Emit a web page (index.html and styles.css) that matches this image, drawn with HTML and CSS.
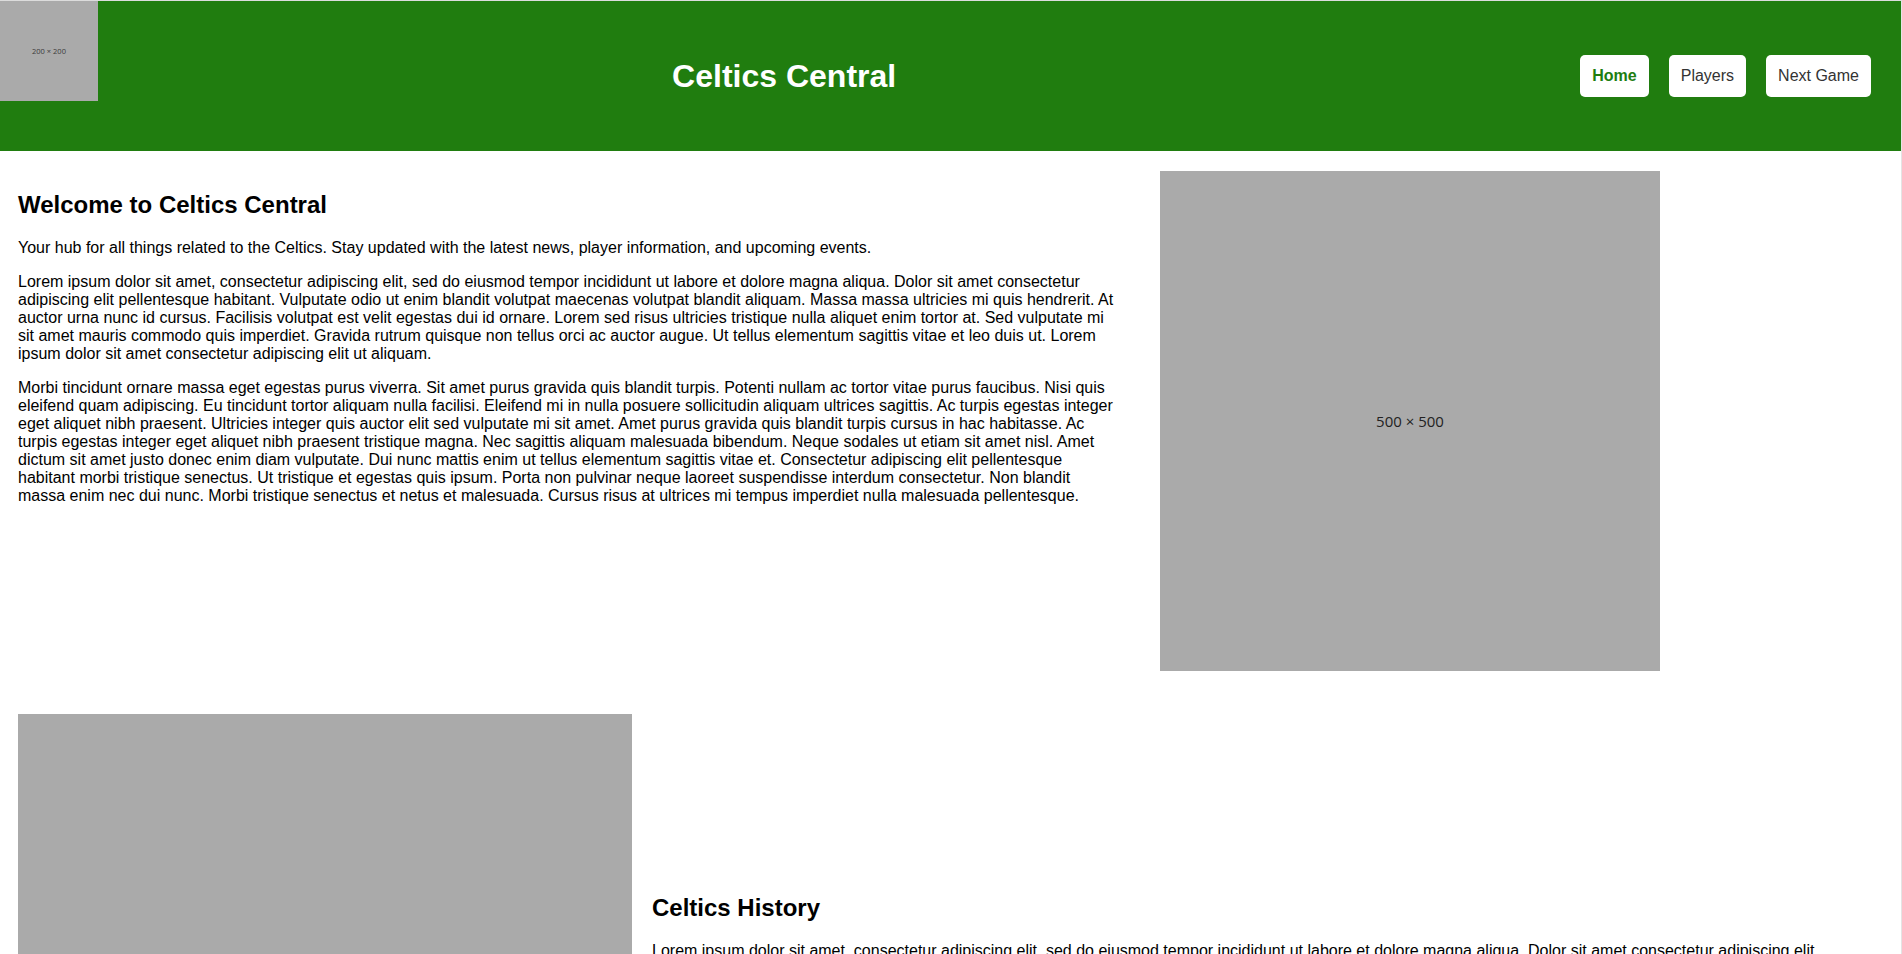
FILE: index.html
```html
<!DOCTYPE html>
<html lang="en">
<head>
<meta charset="utf-8">
<title>Celtics Central</title>
<link rel="stylesheet" href="styles.css">
</head>
<body>
<header class="site-header">
  <div class="logo"><span>200 × 200</span></div>
  <h1 class="site-title">Celtics Central</h1>
  <nav class="nav">
    <a class="nav-btn active" href="#">Home</a>
    <a class="nav-btn" href="#">Players</a>
    <a class="nav-btn" href="#">Next Game</a>
  </nav>
</header>
<main>
  <section class="welcome">
    <div class="welcome-text">
      <h2>Welcome to Celtics Central</h2>
      <p>Your hub for all things related to the Celtics. Stay updated with the latest news, player information, and upcoming events.</p>
      <p>Lorem ipsum dolor sit amet, consectetur adipiscing elit, sed do eiusmod tempor incididunt ut labore et dolore magna aliqua. Dolor sit amet consectetur adipiscing elit pellentesque habitant. Vulputate odio ut enim blandit volutpat maecenas volutpat blandit aliquam. Massa massa ultricies mi quis hendrerit. At auctor urna nunc id cursus. Facilisis volutpat est velit egestas dui id ornare. Lorem sed risus ultricies tristique nulla aliquet enim tortor at. Sed vulputate mi sit amet mauris commodo quis imperdiet. Gravida rutrum quisque non tellus orci ac auctor augue. Ut tellus elementum sagittis vitae et leo duis ut. Lorem ipsum dolor sit amet consectetur adipiscing elit ut aliquam.</p>
      <p>Morbi tincidunt ornare massa eget egestas purus viverra. Sit amet purus gravida quis blandit turpis. Potenti nullam ac tortor vitae purus faucibus. Nisi quis eleifend quam adipiscing. Eu tincidunt tortor aliquam nulla facilisi. Eleifend mi in nulla posuere sollicitudin aliquam ultrices sagittis. Ac turpis egestas integer eget aliquet nibh praesent. Ultricies integer quis auctor elit sed vulputate mi sit amet. Amet purus gravida quis blandit turpis cursus in hac habitasse. Ac turpis egestas integer eget aliquet nibh praesent tristique magna. Nec sagittis aliquam malesuada bibendum. Neque sodales ut etiam sit amet nisl. Amet dictum sit amet justo donec enim diam vulputate. Dui nunc mattis enim ut tellus elementum sagittis vitae et. Consectetur adipiscing elit pellentesque habitant morbi tristique senectus. Ut tristique et egestas quis ipsum. Porta non pulvinar neque laoreet suspendisse interdum consectetur. Non blandit massa enim nec dui nunc. Morbi tristique senectus et netus et malesuada. Cursus risus at ultrices mi tempus imperdiet nulla malesuada pellentesque.</p>
    </div>
    <div class="placeholder big"><span>500 × 500</span></div>
  </section>
  <section class="history">
    <div class="placeholder history-img"></div>
    <div class="history-text">
      <h2>Celtics History</h2>
      <p>Lorem ipsum dolor sit amet, consectetur adipiscing elit, sed do eiusmod tempor incididunt ut labore et dolore magna aliqua. Dolor sit amet consectetur adipiscing elit pellentesque habitant. Vulputate odio ut enim blandit volutpat maecenas volutpat blandit aliquam. Massa massa ultricies mi quis hendrerit. At auctor urna nunc id cursus. Facilisis volutpat est velit egestas dui id ornare.</p>
      <p>Morbi tincidunt ornare massa eget egestas purus viverra. Sit amet purus gravida quis blandit turpis. Potenti nullam ac tortor vitae purus faucibus. Nisi quis eleifend quam adipiscing.</p>
    </div>
  </section>
</main>
</body>
</html>
```
FILE: styles.css
```css
html, body {
  margin: 0;
  padding: 0;
}

body {
  font-family: "Liberation Sans", Arial, sans-serif;
  font-size: 16px;
  color: #000;
  background: #fff;
  border-top: 1px solid #dcdcdc;
  border-right: 1px solid #e4e4e4;
}

.site-header {
  display: flex;
  justify-content: space-between;
  align-items: center;
  height: 150px;
  padding-right: 30px;
  background: #207d0f;
}

.logo {
  align-self: flex-start;
  width: 98px;
  height: 100px;
  background: #aaa;
  display: flex;
  align-items: center;
  justify-content: center;
}

.logo span {
  font-family: "Open Sans", "DejaVu Sans", sans-serif;
  font-size: 7.5px;
  color: #3a3a3a;
}

.site-title {
  margin: 0 110px 0 0;
  font-size: 32px;
  font-weight: bold;
  color: #fff;
}

.nav {
  display: flex;
  gap: 20px;
}

.nav-btn {
  display: block;
  padding: 12px;
  background: #fff;
  color: #333;
  border-radius: 5px;
  text-decoration: none;
  font-size: 16px;
}

.nav-btn.active {
  color: #207d0f;
  font-weight: bold;
}

h2 {
  font-size: 24px;
  margin: 20px 0;
}

p {
  margin: 16px 0;
}

.welcome {
  display: flex;
  align-items: flex-start;
  gap: 46px;
  padding: 20px 18px;
}

.welcome-text {
  flex: 0 0 1096px;
}

.placeholder {
  background: #aaa;
  display: flex;
  align-items: center;
  justify-content: center;
}

.placeholder span {
  font-family: "Open Sans", "DejaVu Sans", sans-serif;
  font-size: 15px;
  color: #222;
}

.big {
  flex: 0 0 500px;
  height: 500px;
}

.history {
  display: flex;
  align-items: flex-start;
  gap: 20px;
  padding: 23px 18px 20px;
}

.history-img {
  flex: 0 0 614px;
  height: 420px;
}

.history-text {
  flex: 1;
  padding-top: 160px;
}
```
